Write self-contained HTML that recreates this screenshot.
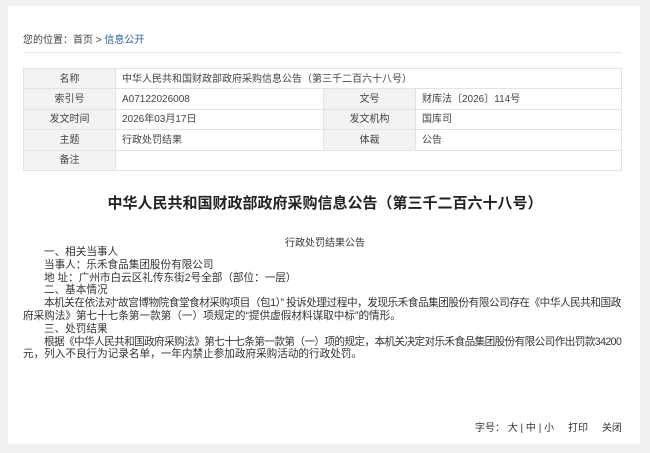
<!DOCTYPE html>
<html><head><meta charset="utf-8"><style>
*{margin:0;padding:0;box-sizing:border-box}
body{width:650px;height:453px;background:#f1f1f1;font-family:"Liberation Sans","Noto Sans CJK SC",sans-serif;color:#333;overflow:hidden;position:relative}
.panel{position:absolute;left:8px;top:6px;width:632px;height:438px;background:#fff}
.bc{position:absolute;left:23px;top:34px;font-size:10px;line-height:13px;color:#444}
.bc a{color:#2a5f9e}
.hr{position:absolute;left:23px;top:52px;width:599px;height:1px;background:#e6e6e6}
table{position:absolute;left:23px;top:68px;width:599px;border-collapse:collapse;font-size:10px;color:#444;table-layout:fixed}
td{border:1px solid #e3e3e3;height:20.4px;line-height:14px;padding:2px 6px 0;vertical-align:middle;white-space:nowrap}
td.l{background:#f3f3f3;text-align:center}
h1{position:absolute;left:0;width:650px;top:194px;text-align:center;font-size:15px;font-weight:bold;color:#222;line-height:20px}
.sub{position:absolute;left:0;width:650px;top:234px;text-align:center;font-size:10px;color:#333}
.body{position:absolute;left:23px;top:246px;width:610px;font-size:10.6px;line-height:12.8px;color:#333}
.body div{white-space:nowrap}
.i{padding-left:21px}
.t{letter-spacing:-0.45px}
.u{letter-spacing:-0.58px}
.ft{position:absolute;left:475px;top:419px;font-size:10px;color:#333;white-space:pre}
</style></head><body>
<div class="panel"></div>
<div class="bc">您的位置：首页 &gt; <a>信息公开</a></div>
<div class="hr"></div>
<table>
<colgroup><col style="width:92px"><col style="width:208px"><col style="width:92px"><col></colgroup>
<tr><td class="l">名称</td><td colspan="3">中华人民共和国财政部政府采购信息公告（第三千二百六十八号）</td></tr>
<tr><td class="l">索引号</td><td>A07122026008</td><td class="l">文号</td><td>财库法〔2026〕114号</td></tr>
<tr><td class="l">发文时间</td><td>2026年03月17日</td><td class="l">发文机构</td><td>国库司</td></tr>
<tr><td class="l">主题</td><td>行政处罚结果</td><td class="l">体裁</td><td>公告</td></tr>
<tr><td class="l">备注</td><td colspan="3"></td></tr>
</table>
<h1>中华人民共和国财政部政府采购信息公告（第三千二百六十八号）</h1>
<div class="sub">行政处罚结果公告</div>
<div class="body">
<div class="i">一、相关当事人</div>
<div class="i">当事人：乐禾食品集团股份有限公司</div>
<div class="i">地 址：广州市白云区礼传东街2号全部（部位：一层）</div>
<div class="i">二、基本情况</div>
<div class="i t">本机关在依法对“故宫博物院食堂食材采购项目（包1）” 投诉处理过程中，发现乐禾食品集团股份有限公司存在《中华人民共和国政</div>
<div>府采购法》第七十七条第一款第（一）项规定的“提供虚假材料谋取中标”的情形。</div>
<div class="i">三、处罚结果</div>
<div class="i u">根据《中华人民共和国政府采购法》第七十七条第一款第（一）项的规定，本机关决定对乐禾食品集团股份有限公司作出罚款34200</div>
<div>元，列入不良行为记录名单，一年内禁止参加政府采购活动的行政处罚。</div>
</div>
<div class="ft">字号： 大 | 中 | 小     打印     关闭</div>
</body></html>
